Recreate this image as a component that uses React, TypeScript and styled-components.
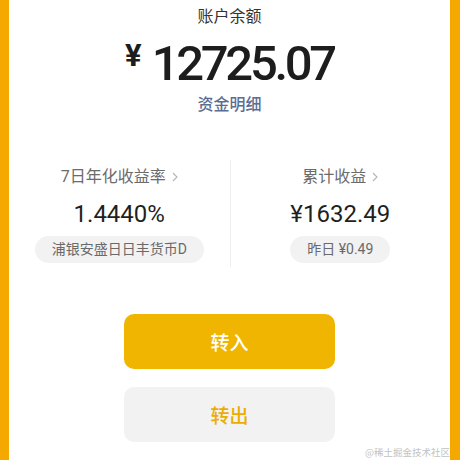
import styled, { createGlobalStyle } from 'styled-components'

const GlobalStyle = createGlobalStyle`
  html, body {
    margin: 0;
    padding: 0;
    background: #f5a900;
  }
  body {
    font-family: Roboto, 'Noto Sans CJK SC', sans-serif;
  }
`

const Page = styled.div`
  position: relative;
  width: 441px;
  height: 460px;
  margin-left: 9px;
  background: #ffffff;
  display: flex;
  flex-direction: column;
  align-items: center;
  overflow: hidden;
`

const Title = styled.div`
  margin-top: 6px;
  font-size: 16px;
  line-height: 22px;
  color: #333;
`

const Balance = styled.div`
  display: flex;
  align-items: flex-start;
  margin-top: 8px;
  height: 56px;
  color: #1d1d1d;
`

const Yen = styled.span`
  font-size: 31px;
  font-weight: 700;
  line-height: 40px;
  margin-right: 10px;
`

const Amount = styled.span`
  font-size: 49px;
  font-weight: 500;
  line-height: 56px;
  letter-spacing: -3.3px;
`

const DetailLink = styled.a`
  margin-top: 2px;
  font-size: 16px;
  font-weight: 500;
  line-height: 22px;
  color: #5b6d93;
  text-decoration: none;
`

const Stats = styled.div`
  margin-top: 44px;
  width: 100%;
  display: grid;
  grid-template-columns: 1fr 1fr;
  height: 107px;
`

const StatCol = styled.div<{ divided?: boolean }>`
  display: flex;
  flex-direction: column;
  align-items: center;
  border-left: ${(p) => (p.divided ? '1px solid #efefef' : 'none')};
`

const StatLabel = styled.div`
  margin-top: 6px;
  display: flex;
  align-items: center;
  font-size: 16px;
  line-height: 22px;
  color: #6b6b6b;
`

const Chevron = styled.svg`
  margin-left: 6px;
  width: 6px;
  height: 10px;
`

const StatValue = styled.div`
  margin-top: 11px;
  font-size: 24px;
  line-height: 30px;
  color: #1f1f1f;
`

const Pill = styled.div`
  margin-top: 7px;
  height: 27px;
  padding: 0 17px;
  border-radius: 14px;
  background: #f2f2f2;
  font-size: 14px;
  line-height: 27px;
  color: #6a6a6a;
  white-space: nowrap;
`

const Button = styled.button<{ primary?: boolean }>`
  width: 211px;
  height: 55px;
  border: none;
  border-radius: 10px;
  background: ${(p) => (p.primary ? '#efb500' : '#f2f2f2')};
  color: ${(p) => (p.primary ? '#ffffff' : '#ebad00')};
  font-family: 'Noto Sans CJK SC', sans-serif;
  font-size: 19px;
  font-weight: 500;
  cursor: pointer;
`

const FirstButton = styled(Button)`
  margin-top: 47px;
`

const SecondButton = styled(Button)`
  margin-top: 18px;
`

const Watermark = styled.div`
  position: absolute;
  right: 0;
  bottom: 2px;
  font-size: 9.5px;
  line-height: 12px;
  color: #c2c2c2;
  font-family: 'Noto Sans CJK SC', sans-serif;
`

function Arrow() {
  return (
    <Chevron viewBox="0 0 6 10">
      <path d="M1 1 L5 5 L1 9" fill="none" stroke="#b5b5b5" strokeWidth="1.1" />
    </Chevron>
  )
}

export default function App() {
  return (
    <>
      <GlobalStyle />
      <Page>
        <Title>账户余额</Title>
        <Balance>
          <Yen>¥</Yen>
          <Amount>12725.07</Amount>
        </Balance>
        <DetailLink href="#">资金明细</DetailLink>
        <Stats>
          <StatCol>
            <StatLabel>
              7日年化收益率
              <Arrow />
            </StatLabel>
            <StatValue>1.4440%</StatValue>
            <Pill>浦银安盛日日丰货币D</Pill>
          </StatCol>
          <StatCol divided>
            <StatLabel>
              累计收益
              <Arrow />
            </StatLabel>
            <StatValue>¥1632.49</StatValue>
            <Pill>昨日 ¥0.49</Pill>
          </StatCol>
        </Stats>
        <FirstButton primary>转入</FirstButton>
        <SecondButton>转出</SecondButton>
        <Watermark>@稀土掘金技术社区</Watermark>
      </Page>
    </>
  )
}
